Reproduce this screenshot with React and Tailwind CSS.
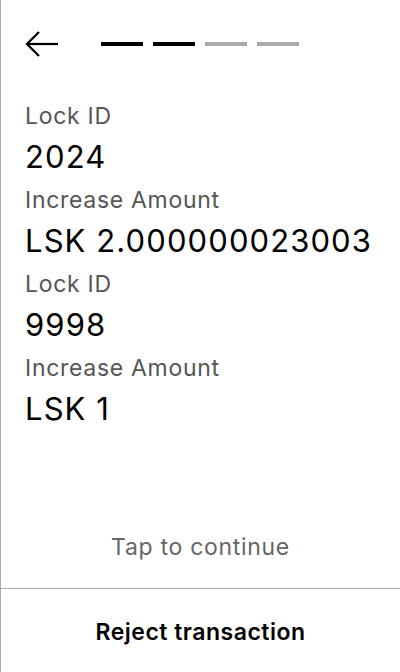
export default function App() {
  const rows = [
    { label: 'Lock ID', value: '2024' },
    { label: 'Increase Amount', value: 'LSK 2.000000023003' },
    { label: 'Lock ID', value: '9998' },
    { label: 'Increase Amount', value: 'LSK 1' },
  ];
  const steps = [true, true, false, false];

  return (
    <div
      className="w-[400px] h-[672px] bg-white border-l border-[#aaaaaa] flex flex-col text-black"
      style={{ fontFamily: 'Inter, "Noto Sans", sans-serif' }}
    >
      <div className="flex items-center h-[86px] pl-[24px] pt-[1px]">
        <svg width="34" height="28" viewBox="0 0 34 28" fill="none" stroke="#000" strokeWidth="2.2">
          <path d="M33 14H2" />
          <path d="M14 2L2 14l12 12" />
        </svg>
        <div className="flex gap-[10px] ml-[42px]">
          {steps.map((done, i) => (
            <div key={i} className={`w-[42px] h-[4px] ${done ? 'bg-black' : 'bg-[#aaaaaa]'}`} />
          ))}
        </div>
      </div>

      <div className="px-[24px] pt-[11px]">
        {rows.map((r, i) => (
          <div key={i} className="mb-[2px]">
            <div className="text-[23px] leading-[38px] tracking-[0.7px] text-[#555555]">{r.label}</div>
            <div className="text-[31px] leading-[44px] tracking-[1.1px]">{r.value}</div>
          </div>
        ))}
      </div>

      <div className="flex-1" />
      <div className="text-center text-[23px] tracking-[0.7px] text-[#666666] pb-[24px]">Tap to continue</div>
      <div className="border-t border-[#aaaaaa] h-[84px] pt-[4px] flex items-center justify-center">
        <span className="text-[23px] tracking-[0.5px] font-semibold">Reject transaction</span>
      </div>
    </div>
  );
}
